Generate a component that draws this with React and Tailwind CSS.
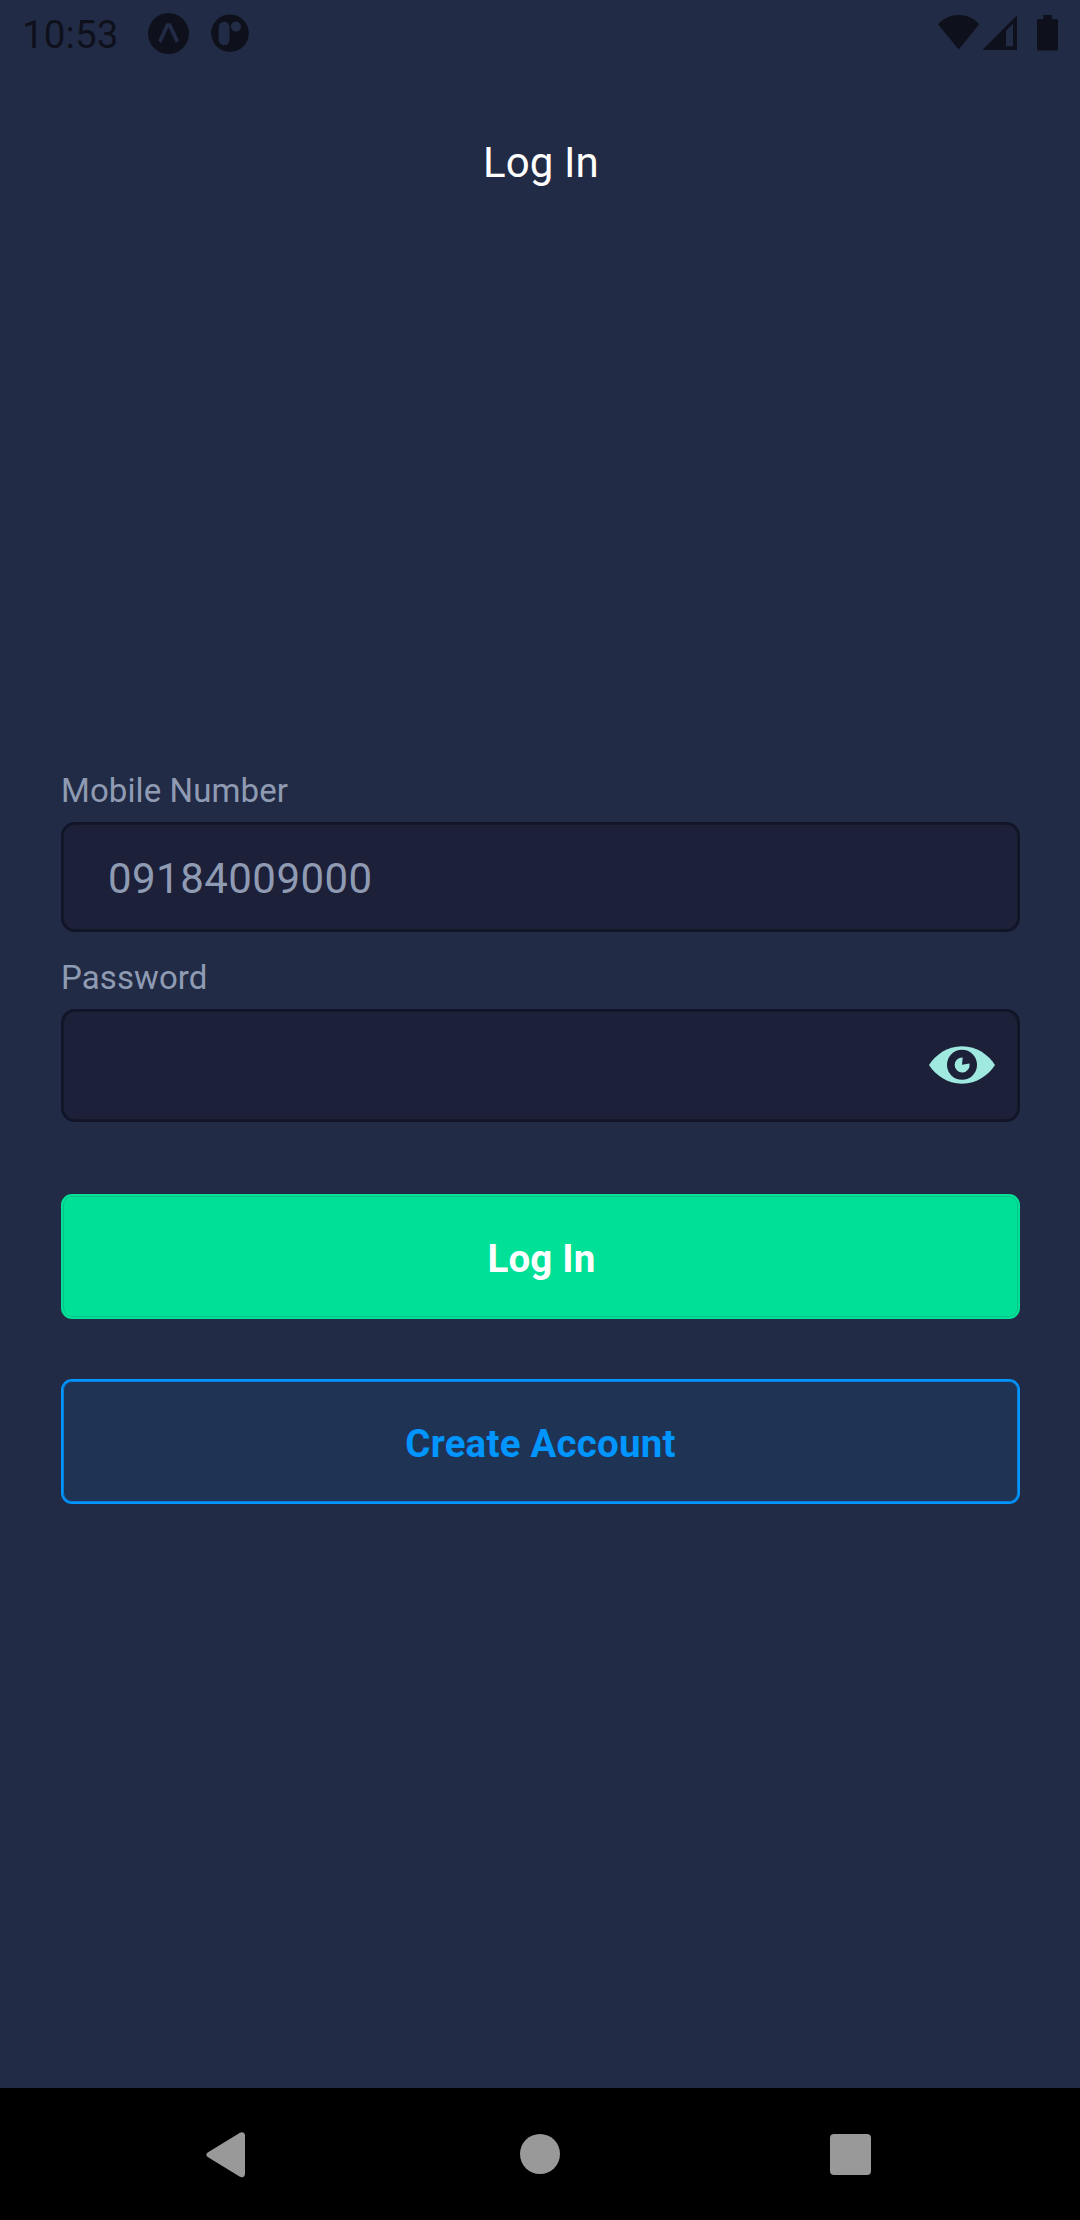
function StatusBar() {
  return (
    <div className="flex h-[66px] items-start pl-[22px] text-[#0e111c]">
      <span className="mt-3 h-[45px] w-[126px] text-[38.5px] leading-[45px] tracking-[0.15px]">10:53</span>
      <svg className="mt-[13px] h-[41px] w-[41px]" viewBox="0 0 41 41">
        <circle cx="20.5" cy="20.5" r="20.5" fill="currentColor" />
        <path d="M18.2 10.2h4.8L31 27.7l-3.1 2.4-7.4-15.8-7.2 15.8-3.1-2.4z" fill="#222b45" />
      </svg>
      <svg className="mt-[14px] ml-[21.5px] h-[38px] w-[38px]" viewBox="0 0 38 38">
        <circle cx="19" cy="19.2" r="18.8" fill="currentColor" />
        <rect x="7.7" y="7.7" width="10.8" height="23.6" rx="5.4" fill="#222b45" />
        <circle cx="24.9" cy="12.6" r="5.1" fill="#222b45" />
      </svg>
      <svg className="mt-[15px] ml-auto h-[35px] w-[42px]" viewBox="0 0 42 35">
        <path d="M0 9.2C5.800 3 13 .1 20.700 .1S35.600 3 41.200 9.200L20.700 34.600z" fill="currentColor" />
      </svg>
      <svg className="mt-[15px] ml-[2px] h-[36px] w-[36px]" viewBox="0 0 36 36">
        <path fillRule="evenodd" d="M.3 35L35 .3V35zM24 15.800V31.200h7V8.800z" fill="currentColor" />
      </svg>
      <svg className="mt-[15px] mr-[22px] ml-[19px] h-[36px] w-[21px]" viewBox="0 0 21 36">
        <path d="M6.300 0h8.700v4h4.500q1.500 0 1.500 1.500v28.500q0 1.600-1.500 1.600h-18q-1.500 0-1.500-1.600v-28.500q0-1.500 1.500-1.500h4.800z" fill="currentColor" />
      </svg>
    </div>
  );
}

function EyeIcon() {
  return (
    <svg className="h-[38px] w-[66px]" viewBox="0 0 66 38">
      <path d="M0 19C6.500 9 18 .3 33 .3S59.500 9 66 19C59.500 29 48 37.700 33 37.700S6.500 29 0 19z" fill="#a0e9e1" />
      <circle cx="33" cy="18.800" r="15" fill="#1c2039" />
      <path d="M33 18.800L33.700 11.500A7.500 7.500 0 1 0 40.500 17.600z" fill="#a0e9e1" />
    </svg>
  );
}

function Field({ label, children, className }) {
  return (
    <div className={className}>
      <div className="mb-3 h-[39px] text-[33px] leading-[39px] tracking-[0.1px] text-[#8f9bb3]">{label}</div>
      {children}
    </div>
  );
}

export default function App() {
  return (
    <div className="flex h-[2220px] w-[1080px] flex-col bg-[#222b45] font-[Roboto,sans-serif]">
      <StatusBar />
      <header className="flex h-[193px] justify-center pt-[72px] pl-[2px] text-[42px] leading-[49px] tracking-[0.1px] text-white">
        Log In
      </header>
      <main className="flex flex-1 flex-col pt-[512px] pr-[60px] pl-[61px]">
        <Field label="Mobile Number">
          <div className="flex h-[110px] items-center rounded-[14px] border-2 border-[#101426] bg-[#1c2039] pt-[3px] pl-[45px] text-[42px] leading-[49px] tracking-[0.45px] text-[#8f9bb3] inset-shadow-[0_0_0_1px_#141829]">
            09184009000
          </div>
        </Field>
        <Field label="Password" className="mt-[26px]">
          <div className="flex h-[113px] items-center justify-end rounded-[14px] border-2 border-[#101426] bg-[#1c2039] pr-[23px] pb-px inset-shadow-[0_0_0_1px_#141829]">
            <EyeIcon />
          </div>
        </Field>
        <button className="mt-[72px] flex h-[125px] shrink-0 items-center justify-center rounded-[11px] border-2 border-[#00e096] bg-[#00e096] pt-[3px] pl-[2px] text-[38.5px] leading-[45px] font-bold tracking-[0.2px] text-white inset-shadow-[0_0_0_1px_#0bc087]">
          Log In
        </button>
        <button className="mt-[60px] flex h-[125px] shrink-0 items-center justify-center rounded-[11px] border-2 border-[#0095ff] bg-[#1f3454] pt-[3px] text-[38.5px] leading-[45px] font-bold tracking-[0.2px] text-[#0095ff] inset-shadow-[0_0_0_1px_#087dd7]">
          Create Account
        </button>
      </main>
      <nav className="flex h-[132px] items-start bg-black pl-[206px]">
        <svg className="mt-[44px] h-[46px] w-[39px]" viewBox="0 0 39 46">
          <path d="M1.700 20.400L33.500.9Q36.500-.6 38.300 1.300Q39 2 39 3.500V41.500Q39 43.500 38 44.400Q36 46 33.500 44.600L1.700 24.900Q-1 22.600 1.700 20.400z" fill="#999" />
        </svg>
        <div className="mt-[46px] ml-[275px] h-10 w-10 rounded-full bg-[#999]" />
        <div className="mt-[46px] ml-[270px] h-[41px] w-[41px] rounded-[4px] bg-[#999]" />
      </nav>
    </div>
  );
}
